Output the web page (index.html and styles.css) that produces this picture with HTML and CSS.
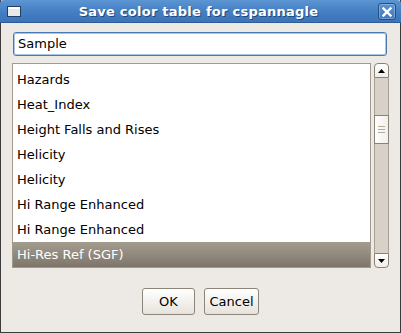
FILE: index.html
```html
<!DOCTYPE html>
<html>
<head>
<meta charset="utf-8">
<link rel="stylesheet" href="styles.css">
</head>
<body>
<div class="window">
  <div class="titlebar">
    <svg class="winicon" width="14" height="11" viewBox="0 0 14 11">
      <rect x="0.5" y="0.5" width="13" height="10" fill="#e8e8e8" stroke="#1f3f66"/>
      <rect x="1" y="1" width="12" height="2" fill="#ffffff"/>
    </svg>
    <div class="title">Save color table for cspannagle</div>
    <div class="close">
      <svg width="10" height="10" viewBox="0 0 10 10">
        <path d="M1.5 1.5 L8.5 8.5 M8.5 1.5 L1.5 8.5" stroke="#ffffff" stroke-width="2.4" stroke-linecap="square"/>
      </svg>
    </div>
  </div>
  <div class="content">
    <div class="entry">Sample</div>
    <div class="listrow">
      <div class="list">
        <div class="item">Hazards</div>
        <div class="item">Heat_Index</div>
        <div class="item">Height Falls and Rises</div>
        <div class="item">Helicity</div>
        <div class="item">Helicity</div>
        <div class="item">Hi Range Enhanced</div>
        <div class="item">Hi Range Enhanced</div>
        <div class="item selected">Hi-Res Ref (SGF)</div>
      </div>
      <div class="scrollbar">
        <div class="sbtn up"><svg width="7" height="4" viewBox="0 0 7 4"><path d="M0 4 L3.5 0 L7 4 Z" fill="#000"/></svg></div>
        <div class="trough">
          <div class="thumb">
            <span></span><span></span><span></span>
          </div>
        </div>
        <div class="sbtn down"><svg width="7" height="4" viewBox="0 0 7 4"><path d="M0 0 L7 0 L3.5 4 Z" fill="#000"/></svg></div>
      </div>
    </div>
    <div class="buttons">
      <div class="btn ok">OK</div>
      <div class="btn cancel">Cancel</div>
    </div>
  </div>
</div>
</body>
</html>
```
FILE: styles.css
```css
html, body {
  margin: 0;
  padding: 0;
  background: #edeae6;
}
.window {
  width: 401px;
  height: 333px;
  box-sizing: border-box;
  border-left: 1px solid #3c3c3c;
  border-right: 1px solid #3c3c3c;
  border-bottom: 1px solid #3c3c3c;
  background: #edeae6;
  display: flex;
  flex-direction: column;
  font-family: "DejaVu Sans", sans-serif;
  font-size: 13px;
  color: #000;
}
.titlebar {
  height: 22px;
  margin: 0 -1px;
  border-bottom: 1px solid #2f5c94;
  border-radius: 4px 4px 0 0;
  background: linear-gradient(#5b95d3, #4580c4 50%, #3b74b8);
  display: flex;
  align-items: center;
  position: relative;
}
.winicon {
  margin-left: 7px;
  margin-top: 1px;
}
.title {
  flex: 1;
  text-align: center;
  color: #ffffff;
  font-weight: bold;
  font-size: 13px;
  letter-spacing: 0.25px;
  text-shadow: 1px 1px 0 #23497a;
  margin-left: -2px;
  margin-top: 1px;
}
.close {
  width: 16px;
  height: 15px;
  margin-right: 5px;
  margin-top: 1px;
  border: 1px solid #274f83;
  border-radius: 3px;
  background: linear-gradient(#5a93d1, #3f7ac0);
  box-shadow: inset 0 0 0 1px rgba(255,255,255,0.25);
  display: flex;
  align-items: center;
  justify-content: center;
}
.content {
  flex: 1;
  display: flex;
  flex-direction: column;
  padding: 9px 0 0 11px;
}
.entry {
  width: 374px;
  height: 24px;
  box-sizing: border-box;
  margin-left: 1px;
  border: 1px solid #4a7ab3;
  border-radius: 3px;
  background: #ffffff;
  box-shadow: inset 0 0 0 1px #a9c4e4;
  padding: 0 0 0 4px;
  line-height: 22px;
}
.listrow {
  display: flex;
  margin-top: 7px;
  height: 205px;
}
.list {
  width: 359px;
  height: 205px;
  box-sizing: border-box;
  border: 1px solid #a39a8d;
  background: #ffffff;
  padding-top: 3px;
  overflow: hidden;
}
.item {
  height: 25px;
  line-height: 25px;
  padding-left: 4px;
  white-space: nowrap;
}
.item.selected {
  background: linear-gradient(#a59c90, #7e766a);
  color: #ffffff;
}
.scrollbar {
  margin-left: 3px;
  width: 15px;
  height: 205px;
  display: flex;
  flex-direction: column;
}
.sbtn {
  height: 15px;
  box-sizing: border-box;
  border: 1px solid #8a8276;
  background: linear-gradient(#ffffff, #f0ede9);
  display: flex;
  align-items: center;
  justify-content: center;
}
.sbtn.up {
  border-radius: 4px 4px 0 0;
}
.sbtn.down {
  border-radius: 0 0 4px 4px;
}
.trough {
  flex: 1;
  background: #d7d1c8;
  border-left: 1px solid #a8a093;
  border-right: 1px solid #a8a093;
  padding-top: 37px;
}
.thumb {
  height: 29px;
  box-sizing: border-box;
  margin: 0 -1px;
  border: 1px solid #8a8276;
  background: linear-gradient(90deg, #ffffff, #f2efeb);
  display: flex;
  flex-direction: column;
  align-items: center;
  justify-content: center;
  gap: 2px;
}
.thumb span {
  width: 7px;
  height: 1px;
  background: #b3aa9e;
}
.buttons {
  display: flex;
  justify-content: center;
  gap: 9px;
  margin-top: 20px;
  margin-left: -11px;
}
.btn {
  height: 27px;
  box-sizing: border-box;
  border: 1px solid #8d8579;
  border-radius: 3px;
  background: linear-gradient(#ffffff, #f1eeea 60%, #e6e2dc);
  text-align: center;
  line-height: 25px;
}
.btn.ok {
  width: 53px;
}
.btn.cancel {
  width: 55px;
}
```
